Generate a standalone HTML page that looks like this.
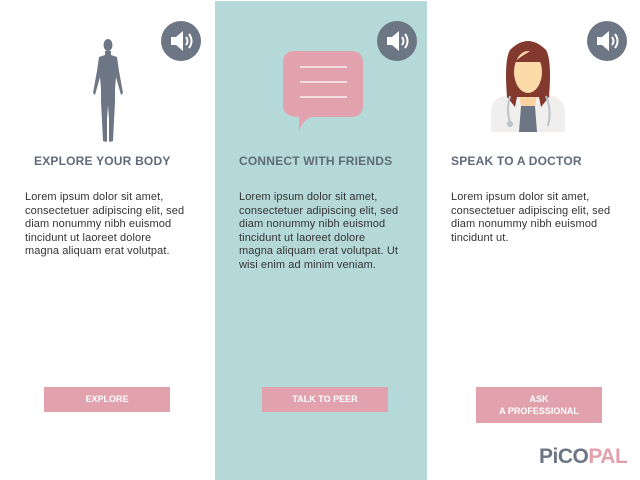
<!DOCTYPE html>
<html><head><meta charset="utf-8"><style>
body{margin:0;width:640px;height:480px;background:#fff;position:relative;overflow:hidden;font-family:"Liberation Sans",sans-serif}
.abs{position:absolute}
.teal{left:215px;top:1px;width:212px;height:479px;background:#b5d9d8}
h2{position:absolute;margin:0;font-size:12px;font-weight:bold;color:#5f6b7a;top:154px;letter-spacing:0.2px}
p{position:absolute;margin:0;font-size:11px;line-height:13.5px;color:#333;top:191px;white-space:nowrap;letter-spacing:0.1px}
.btn{position:absolute;background:#e2a2ad;color:#fff;font-size:9px;font-weight:bold;text-align:center;width:126px;top:387px;height:25px;line-height:25px}
.spk{position:absolute;top:21px;width:40px;height:40px;border-radius:50%;background:#6c7685}
</style></head><body>
<div class="abs teal"></div>
<svg width="0" height="0" style="position:absolute"><defs><g id="sp"><path d="M10 16h5l7-6v20l-7-6h-5z" fill="#fff"/><path d="M25 16q3 4 0 8M28 13q5 7 0 14" stroke="#fff" stroke-width="2" fill="none"/></g></defs></svg>
<div class="spk" style="left:161px"><svg width="40" height="40"><use href="#sp"/></svg></div>
<div class="spk" style="left:377px"><svg width="40" height="40"><use href="#sp"/></svg></div>
<div class="spk" style="left:587px"><svg width="40" height="40"><use href="#sp"/></svg></div>
<svg class="abs" style="left:90px;top:37px" width="36" height="108"><g fill="#6c7685"><ellipse cx="18" cy="8" rx="4.5" ry="6"/><path d="M15 14h6v4l6 2 2 14 4 22-2 2-5-18-1 12 0 12-1 20-1 20-3 1-1-1 0-22-1-14-1 14 0 22-1 1-3-1-1-20-1-20 0-12-1-12-5 18-2-2 4-22 2-14 6-2z"/></g></svg>
<svg class="abs" style="left:283px;top:51px" width="80" height="82"><path d="M12 0h56q12 0 12 12v42q0 12-12 12H28q-8 3-12 14V66Q0 66 0 54V12Q0 0 12 0z" fill="#e2a2ad"/><g stroke="#fff" stroke-width="1.3"><line x1="17" y1="16" x2="64" y2="16"/><line x1="17" y1="31" x2="64" y2="31"/><line x1="17" y1="46" x2="64" y2="46"/></g></svg>
<svg class="abs" style="left:488px;top:38px" width="80" height="94"><path d="M3 94V74q0-12 12-16l15-5h20l15 5q12 4 12 16v20z" fill="#f1efed"/><path d="M30 53h20l-4 20h-12z" fill="#f9d2a3"/><path d="M33 68h14l2 26H31z" fill="#6c7685"/><path d="M22 12q18-18 36 0 6 10 3 47l-8 10-2-10H29l-2 10-8-10q-3-37 3-47z" fill="#83392e"/><ellipse cx="40" cy="34" rx="14" ry="21" fill="#fddba9"/><path d="M26 24q10-8 22-14 6 6 6 14z" fill="#83392e"/><path d="M22 58q-4 14 0 26M58 58q6 14 2 30" stroke="#b8c3cd" stroke-width="2" fill="none"/><circle cx="22" cy="86" r="3" fill="#b8c3cd"/></svg>
<h2 style="left:34px">EXPLORE YOUR BODY</h2>
<h2 style="left:239px">CONNECT WITH FRIENDS</h2>
<h2 style="left:451px">SPEAK TO A DOCTOR</h2>
<p style="left:25px">Lorem ipsum dolor sit amet,<br>consectetuer adipiscing elit, sed<br>diam nonummy nibh euismod<br>tincidunt ut laoreet dolore<br>magna aliquam erat volutpat.</p>
<p style="left:239px">Lorem ipsum dolor sit amet,<br>consectetuer adipiscing elit, sed<br>diam nonummy nibh euismod<br>tincidunt ut laoreet dolore<br>magna aliquam erat volutpat. Ut<br>wisi enim ad minim veniam.</p>
<p style="left:451px">Lorem ipsum dolor sit amet,<br>consectetuer adipiscing elit, sed<br>diam nonummy nibh euismod<br>tincidunt ut.</p>
<div class="btn" style="left:44px">EXPLORE</div>
<div class="btn" style="left:262px">TALK TO PEER</div>
<div class="btn" style="left:476px;height:36px;line-height:12px;padding-top:6px;box-sizing:border-box">ASK<br>A PROFESSIONAL</div>
<div class="abs" style="left:539px;top:445px;font-size:21px;font-weight:bold;letter-spacing:-0.5px"><span style="color:#6c7685">PiCO</span><span style="color:#e2a2ad">PAL</span></div>
</body></html>
